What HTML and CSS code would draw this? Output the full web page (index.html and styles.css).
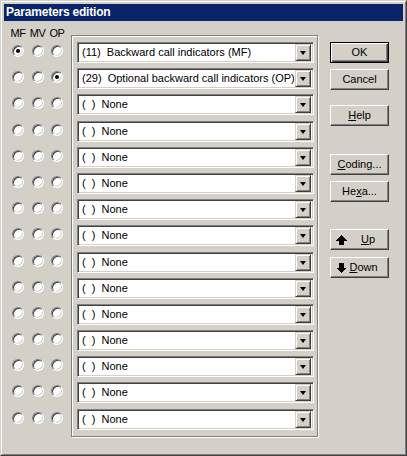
FILE: index.html
```html
<!DOCTYPE html>
<html>
<head>
<meta charset="utf-8">
<link rel="stylesheet" href="styles.css">
</head>
<body>
<div class="window">
  <div class="frame">
    <div class="titlebar">Parameters edition</div>
    <div class="client">
      <div class="left">
        <div class="heads">
          <span class="head">MF</span>
          <span class="head">MV</span>
          <span class="head">OP</span>
        </div>
        <div class="radios">
          <div class="rrow"><span class="radio on"></span><span class="radio"></span><span class="radio"></span></div>
          <div class="rrow"><span class="radio"></span><span class="radio"></span><span class="radio on"></span></div>
          <div class="rrow"><span class="radio"></span><span class="radio"></span><span class="radio"></span></div>
          <div class="rrow"><span class="radio"></span><span class="radio"></span><span class="radio"></span></div>
          <div class="rrow"><span class="radio"></span><span class="radio"></span><span class="radio"></span></div>
          <div class="rrow"><span class="radio"></span><span class="radio"></span><span class="radio"></span></div>
          <div class="rrow"><span class="radio"></span><span class="radio"></span><span class="radio"></span></div>
          <div class="rrow"><span class="radio"></span><span class="radio"></span><span class="radio"></span></div>
          <div class="rrow"><span class="radio"></span><span class="radio"></span><span class="radio"></span></div>
          <div class="rrow"><span class="radio"></span><span class="radio"></span><span class="radio"></span></div>
          <div class="rrow"><span class="radio"></span><span class="radio"></span><span class="radio"></span></div>
          <div class="rrow"><span class="radio"></span><span class="radio"></span><span class="radio"></span></div>
          <div class="rrow"><span class="radio"></span><span class="radio"></span><span class="radio"></span></div>
          <div class="rrow"><span class="radio"></span><span class="radio"></span><span class="radio"></span></div>
          <div class="rrow"><span class="radio"></span><span class="radio"></span><span class="radio"></span></div>
        </div>
      </div>
      <div class="group">
        <div class="combos">
          <div class="combo"><span class="ctext">(11)  Backward call indicators (MF)</span><span class="drop"><i class="tri"></i></span></div>
          <div class="combo"><span class="ctext">(29)  Optional backward call indicators (OP)</span><span class="drop"><i class="tri"></i></span></div>
          <div class="combo"><span class="ctext">(  )  None</span><span class="drop"><i class="tri"></i></span></div>
          <div class="combo"><span class="ctext">(  )  None</span><span class="drop"><i class="tri"></i></span></div>
          <div class="combo"><span class="ctext">(  )  None</span><span class="drop"><i class="tri"></i></span></div>
          <div class="combo"><span class="ctext">(  )  None</span><span class="drop"><i class="tri"></i></span></div>
          <div class="combo"><span class="ctext">(  )  None</span><span class="drop"><i class="tri"></i></span></div>
          <div class="combo"><span class="ctext">(  )  None</span><span class="drop"><i class="tri"></i></span></div>
          <div class="combo"><span class="ctext">(  )  None</span><span class="drop"><i class="tri"></i></span></div>
          <div class="combo"><span class="ctext">(  )  None</span><span class="drop"><i class="tri"></i></span></div>
          <div class="combo"><span class="ctext">(  )  None</span><span class="drop"><i class="tri"></i></span></div>
          <div class="combo"><span class="ctext">(  )  None</span><span class="drop"><i class="tri"></i></span></div>
          <div class="combo"><span class="ctext">(  )  None</span><span class="drop"><i class="tri"></i></span></div>
          <div class="combo"><span class="ctext">(  )  None</span><span class="drop"><i class="tri"></i></span></div>
          <div class="combo"><span class="ctext">(  )  None</span><span class="drop"><i class="tri"></i></span></div>
        </div>
      </div>
      <div class="buttons">
        <div class="btn default b-ok">OK</div>
        <div class="btn b-cancel">Cancel</div>
        <div class="btn b-help"><span><u>H</u>elp</span></div>
        <div class="btn b-coding"><span><u>C</u>oding...</span></div>
        <div class="btn b-hexa"><span>He<u>x</u>a...</span></div>
        <div class="btn icon b-up">
          <svg class="arrow" width="11" height="10" viewBox="0 0 11 10" shape-rendering="crispEdges"><polygon points="5.5,0 11,5.5 8,5.5 8,10 3,10 3,5.5 0,5.5" fill="#000"/></svg>
          <span class="lbl lbl-up"><u>U</u>p</span>
        </div>
        <div class="btn icon b-down">
          <svg class="arrow" width="11" height="10" viewBox="0 0 11 10" shape-rendering="crispEdges"><polygon points="3,0 8,0 8,4.5 11,4.5 5.5,10 0,4.5 3,4.5" fill="#000"/></svg>
          <span class="lbl lbl-down"><u>D</u>own</span>
        </div>
      </div>
    </div>
  </div>
</div>
</body>
</html>
```

FILE: styles.css
```css
html, body {
  margin: 0;
  padding: 0;
  background: #d4d0c8;
}
body {
  font-family: "Liberation Sans", Arial, sans-serif;
  font-size: 11px;
  line-height: 13px;
  color: #000;
}
.window {
  width: 407px;
  height: 456px;
  box-sizing: border-box;
  border: 1px solid;
  border-color: #d4d0c8 #404040 #404040 #d4d0c8;
  background: #d4d0c8;
}
.frame {
  height: 100%;
  box-sizing: border-box;
  border: 1px solid;
  border-color: #fff #808080 #808080 #fff;
  padding: 2px;
  display: flex;
  flex-direction: column;
}
.titlebar {
  height: 17px;
  background: #0a246a;
  color: #fff;
  font-weight: bold;
  font-size: 12px;
  line-height: 16px;
  padding-left: 2px;
  letter-spacing: -0.2px;
}
.client {
  flex: 1;
  display: flex;
  align-items: flex-start;
}
.left {
  width: 67px;
  padding-left: 8px;
  box-sizing: border-box;
}
.heads {
  display: flex;
  gap: 7.5px;
  margin-top: 6px;
  letter-spacing: -0.4px;
}
.head {
  width: 12px;
  display: flex;
  justify-content: center;
  white-space: nowrap;
}
.radios {
  margin-top: 2px;
  display: grid;
  grid-auto-rows: 21px;
  row-gap: 5.2px;
}
.rrow {
  display: flex;
  gap: 7.5px;
  padding-top: 3px;
}
.radio {
  width: 12px;
  height: 12px;
  box-sizing: border-box;
  border-radius: 50%;
  border: 1px solid;
  border-color: #808080 #fff #fff #808080;
  box-shadow: inset 1px 1px 0 #404040, inset -1px -1px 0 #d4d0c8;
  background: #fff;
  display: flex;
  align-items: center;
  justify-content: center;
}
.radio.on::after {
  content: "";
  width: 4px;
  height: 4px;
  border-radius: 50%;
  background: #000;
}
.group {
  margin-top: 14px;
  width: 247px;
  height: 402px;
  box-sizing: border-box;
  border: 1px solid #808080;
  box-shadow: inset 1px 1px 0 #fff, 1px 1px 0 #fff;
  padding: 6px 0 0 5px;
}
.combos {
  display: grid;
  grid-auto-rows: 21px;
  row-gap: 5.2px;
}
.combo {
  width: 237px;
  height: 21px;
  box-sizing: border-box;
  border: 1px solid;
  border-color: #808080 #fff #fff #808080;
  box-shadow: inset 1px 1px 0 #404040, inset -1px -1px 0 #d4d0c8;
  background: #fff;
  display: flex;
  align-items: center;
  padding: 2px;
}
.ctext {
  flex: 1;
  white-space: pre;
  padding-left: 2px;
  overflow: hidden;
}
.drop {
  width: 16px;
  height: 17px;
  box-sizing: border-box;
  background: #d4d0c8;
  border: 1px solid;
  border-color: #d4d0c8 #404040 #404040 #d4d0c8;
  box-shadow: inset 1px 1px 0 #fff, inset -1px -1px 0 #808080;
  display: flex;
  align-items: center;
  justify-content: center;
}
.tri {
  width: 0;
  height: 0;
  border-left: 3.5px solid transparent;
  border-right: 3.5px solid transparent;
  border-top: 4px solid #000;
  margin-top: 1px;
}
.buttons {
  margin-left: 12px;
  margin-top: 21px;
  width: 59px;
  display: flex;
  flex-direction: column;
}
.btn {
  height: 21px;
  box-sizing: border-box;
  border: 1px solid;
  border-color: #fff #404040 #404040 #fff;
  box-shadow: inset -1px -1px 0 #808080;
  background: #d4d0c8;
  display: flex;
  align-items: center;
  justify-content: center;
  white-space: nowrap;
}
.btn.default {
  border: 1px solid #000;
  box-shadow: inset 1px 1px 0 #fff, inset -1px -1px 0 #404040, inset -2px -2px 0 #808080;
}
.b-cancel { margin-top: 6px; }
.b-help { margin-top: 15px; }
.b-coding { margin-top: 28px; }
.b-hexa { margin-top: 6px; }
.b-up { margin-top: 27px; }
.b-down { margin-top: 7px; }
.btn.icon {
  justify-content: flex-start;
  padding-left: 5px;
}
.arrow {
  flex: none;
  display: block;
}
.lbl {
  flex: 1;
  text-align: center;
}
.lbl-up { padding-left: 1px; }
.lbl-down { padding-right: 8px; }
```
